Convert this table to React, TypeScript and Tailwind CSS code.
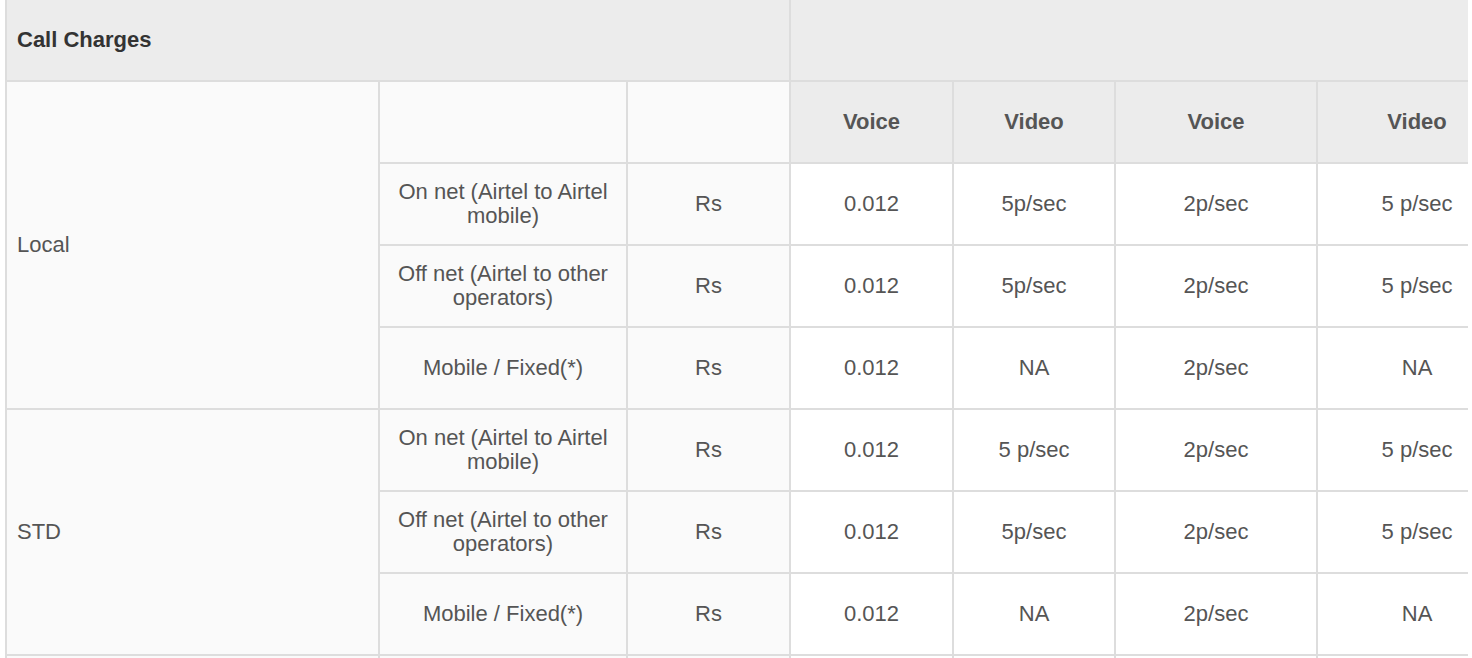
import { Fragment } from "react";

const groups = [
  {
    name: "Local",
    rows: [
      ["On net (Airtel to Airtel mobile)", "Rs", "0.012", "5p/sec", "2p/sec", "5 p/sec"],
      ["Off net (Airtel to other operators)", "Rs", "0.012", "5p/sec", "2p/sec", "5 p/sec"],
      ["Mobile / Fixed(*)", "Rs", "0.012", "NA", "2p/sec", "NA"],
    ],
  },
  {
    name: "STD",
    rows: [
      ["On net (Airtel to Airtel mobile)", "Rs", "0.012", "5 p/sec", "2p/sec", "5 p/sec"],
      ["Off net (Airtel to other operators)", "Rs", "0.012", "5p/sec", "2p/sec", "5 p/sec"],
      ["Mobile / Fixed(*)", "Rs", "0.012", "NA", "2p/sec", "NA"],
    ],
  },
];

const cell = "border-2 border-[#dddddd] align-middle text-center px-4";
const soft = `${cell} bg-[#fafafa]`;
const plain = `${cell} bg-white`;
const head = `${cell} bg-[#ececec] font-bold`;

export default function App() {
  return (
    <div className="w-[1468px] h-[658px] overflow-hidden bg-white pl-[5px]">
      <table
        className="table-fixed border-collapse -mt-[2px] w-[1513px] text-[22px] leading-[24px] text-[#555555]"
        style={{ fontFamily: '"Liberation Sans", Arial, sans-serif' }}
      >
        <colgroup>
          <col className="w-[373px]" />
          <col className="w-[248px]" />
          <col className="w-[163px]" />
          <col className="w-[163px]" />
          <col className="w-[162px]" />
          <col className="w-[202px]" />
          <col className="w-[200px]" />
        </colgroup>
        <tbody>
          <tr className="h-[82px]">
            <th colSpan={3} className={`${head} text-left pl-[10px] text-[#333333]`}>
              Call Charges
            </th>
            <th colSpan={4} className={head}></th>
          </tr>
          {groups.map((g, gi) => (
            <Fragment key={g.name}>
              {gi === 0 && (
                <tr className="h-[82px]">
                  <td rowSpan={4} className={`${soft} text-left pl-[10px]`}>
                    {g.name}
                  </td>
                  <td className={soft}></td>
                  <td className={soft}></td>
                  <td className={head}>Voice</td>
                  <td className={head}>Video</td>
                  <td className={head}>Voice</td>
                  <td className={head}>Video</td>
                </tr>
              )}
              {g.rows.map((r, ri) => (
                <tr key={ri} className="h-[82px]">
                  {gi > 0 && ri === 0 && (
                    <td rowSpan={3} className={`${soft} text-left pl-[10px]`}>
                      {g.name}
                    </td>
                  )}
                  <td className={soft}>{r[0]}</td>
                  <td className={soft}>{r[1]}</td>
                  <td className={plain}>{r[2]}</td>
                  <td className={plain}>{r[3]}</td>
                  <td className={plain}>{r[4]}</td>
                  <td className={plain}>{r[5]}</td>
                </tr>
              ))}
            </Fragment>
          ))}
          <tr className="h-[82px]">
            <td className={soft}></td>
            <td className={soft}></td>
            <td className={soft}></td>
            <td className={plain}></td>
            <td className={plain}></td>
            <td className={plain}></td>
            <td className={plain}></td>
          </tr>
        </tbody>
      </table>
    </div>
  );
}
